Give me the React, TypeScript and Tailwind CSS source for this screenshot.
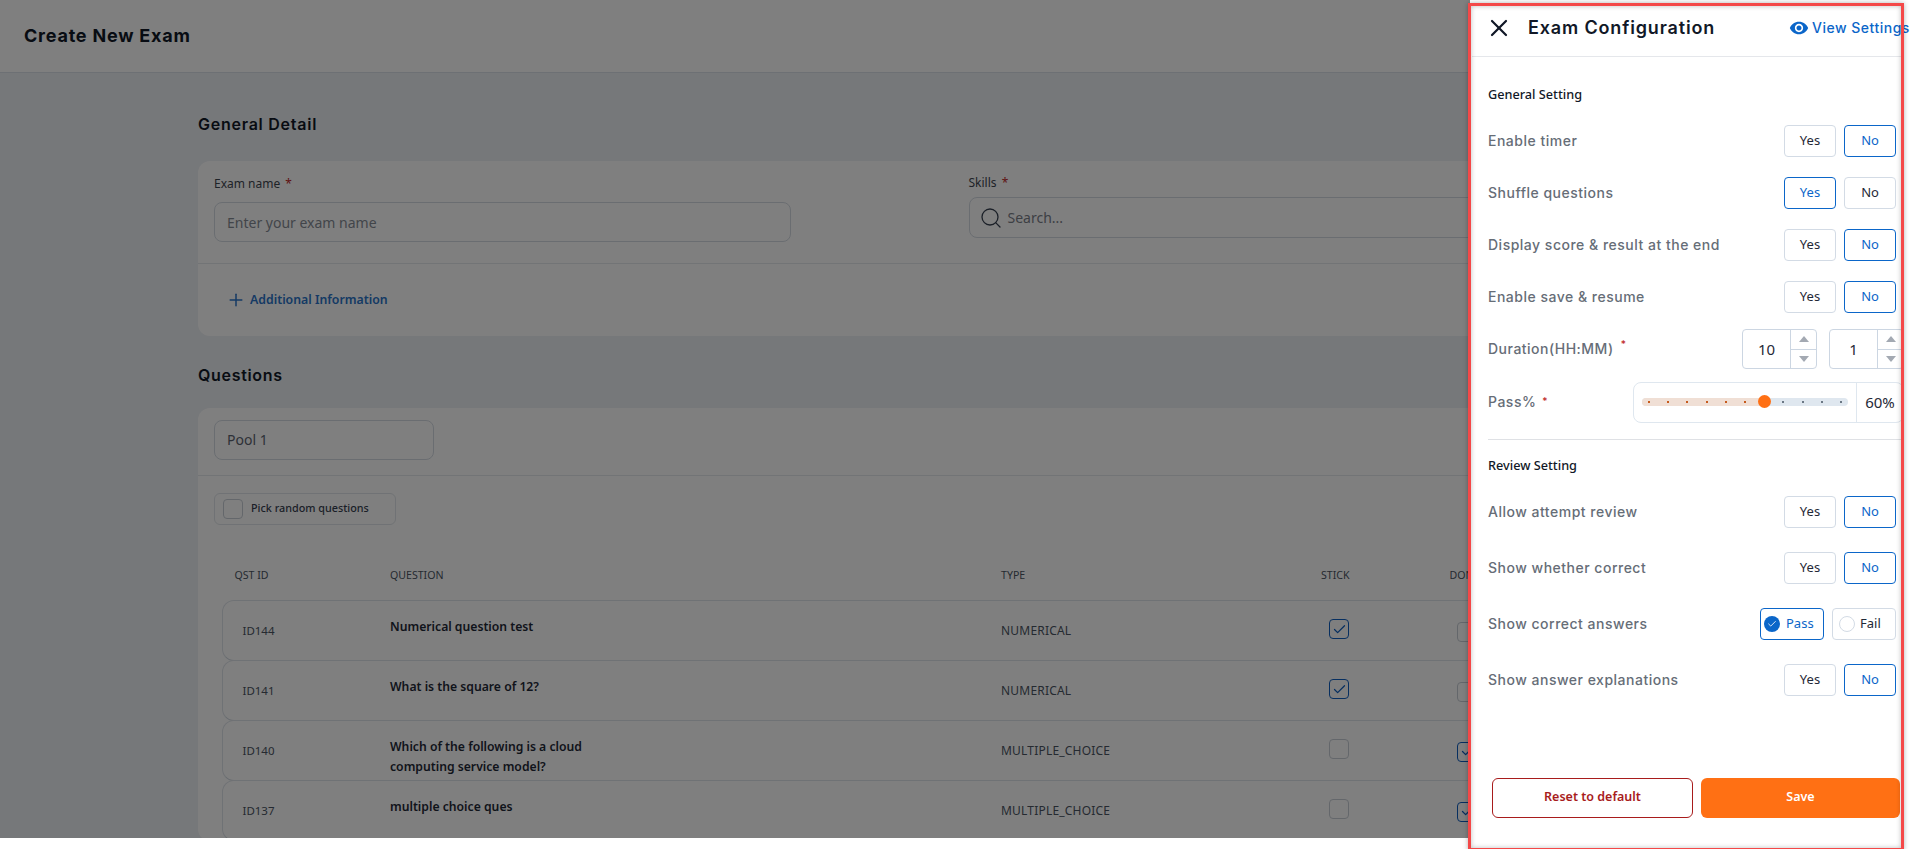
import { Check, Plus, Search, X } from 'lucide-react'
import { MdVisibility } from 'react-icons/md'

const QUESTIONS = [
  { id: 'ID144', text: 'Numerical question test', type: 'NUMERICAL', stick: true, done: false },
  { id: 'ID141', text: 'What is the square of 12?', type: 'NUMERICAL', stick: true, done: false },
  { id: 'ID140', text: 'Which of the following is a cloud computing service model?', type: 'MULTIPLE_CHOICE', stick: false, done: true },
  { id: 'ID137', text: 'multiple choice ques', type: 'MULTIPLE_CHOICE', stick: false, done: true },
]

const GENERAL = [
  { label: 'Enable timer', yes: false },
  { label: 'Shuffle questions', yes: true },
  { label: 'Display score & result at the end', yes: false },
  { label: 'Enable save & resume', yes: false },
]

const DOTS = [7, 26, 45, 65, 84, 103, 122, 141, 161, 180, 199]

const LABEL = "pb-[2px] font-['Inter',sans-serif] text-[14px] font-medium tracking-[0.5px] text-[#666d77]"

function Box({ checked, className }: { checked: boolean; className: string }) {
  return (
    <div className={`flex h-5 w-5 items-center justify-center rounded-[4px] border bg-white ${checked ? 'border-[#0f5fc0]' : 'border-[#c9ced6]'} ${className}`}>
      {checked && <Check size={15} strokeWidth={2} className="text-[#0f5fc0]" />}
    </div>
  )
}

function Choice({ label, active }: { label: string; active: boolean }) {
  return (
    <button className={`h-8 w-[52px] rounded-[4px] border bg-white text-[13px] ${active ? 'border-[#0b66c9] text-[#0b66c9]' : 'border-[#d3dbe5] text-[#1f2937]'}`}>
      {label}
    </button>
  )
}

function YesNoRow({ label, yes, height }: { label: string; yes: boolean; height: string }) {
  return (
    <div className={`flex items-center justify-between pr-2 ${height}`}>
      <span className={LABEL}>{label}</span>
      <div className="flex gap-2">
        <Choice label="Yes" active={yes} />
        <Choice label="No" active={!yes} />
      </div>
    </div>
  )
}

function Stepper({ value }: { value: string }) {
  return (
    <div className="flex h-10 w-[75px] rounded-[4px] border border-[#ccd6e2] bg-white">
      <div className="flex w-[48px] items-center justify-center border-r border-[#ccd6e2] text-[15px] text-[#1f2937]">{value}</div>
      <div className="flex flex-1 flex-col">
        <div className="flex flex-1 items-center justify-center border-b border-[#ccd6e2]">
          <svg width="10" height="6" viewBox="0 0 10 6"><path d="M5 0L10 6H0z" fill="#a3a9b2" /></svg>
        </div>
        <div className="flex flex-1 items-center justify-center">
          <svg width="10" height="6" viewBox="0 0 10 6"><path d="M0 0H10L5 6z" fill="#a3a9b2" /></svg>
        </div>
      </div>
    </div>
  )
}

function Background() {
  return (
    <div className="relative h-[838px] w-[1470px] overflow-hidden bg-[#edf0f4]">
      <div className="w-[1920px]">
        <div className="flex h-[73px] items-center border-b border-[#dbe1e8] bg-white pb-[1px] pl-6">
          <h1 className="font-['Inter',sans-serif] text-[18px] font-bold tracking-[0.78px] text-[#111827]">Create New Exam</h1>
        </div>

        <div className="ml-[198px] w-[1524px]">
          <h2 className="mt-[40px] h-[22px] font-['Inter',sans-serif] text-[16px] font-semibold leading-[22px] tracking-[0.75px] text-[#111827]">General Detail</h2>
          <div className="mt-[26px] h-[175px] rounded-xl bg-white">
            <div className="flex h-[103px] gap-[177.5px] border-b border-[#e5e8ed] px-4">
              <div className="w-[577px] pt-[14px]">
                <label className="block h-[18px] text-[12px] leading-[18px] text-[#3f4650]">Exam name <span className="ml-[2px] text-[#c02626]">*</span></label>
                <div className="mt-[9px] flex h-10 items-center rounded-lg border border-[#d5dbe3] px-[12px] text-[14px] text-[#858b94]">Enter your exam name</div>
              </div>
              <div className="flex-1 pt-[13px]">
                <label className="block h-[18px] text-[12px] leading-[18px] text-[#3f4650]">Skills <span className="ml-[2px] text-[#c02626]">*</span></label>
                <div className="mt-[5px] flex h-[41px] items-center gap-[5px] rounded-lg border border-[#d5dbe3] pl-[9px] text-[14px] text-[#7a8089]">
                  <Search size={24} strokeWidth={1.3} className="text-[#374151]" />
                  Search...
                </div>
              </div>
            </div>
            <div className="flex h-[72px] items-center gap-[4px] pl-[28px] text-[12.3px] font-semibold text-[#2a74c9]">
              <Plus size={20} strokeWidth={1.8} />
              Additional Information
            </div>
          </div>

          <h2 className="mt-[28px] h-[22px] font-['Inter',sans-serif] text-[16px] font-semibold leading-[22px] tracking-[0.68px] text-[#111827]">Questions</h2>
          <div className="mt-[22px] rounded-xl bg-white">
            <div className="h-[68px] border-b border-[#e5e8ed] px-4 pt-3">
              <div className="flex h-10 w-[220px] items-center rounded-lg border border-[#d5dbe3] px-[12px] pb-[2px] text-[14px] text-[#5b6370]">Pool 1</div>
            </div>
            <div className="px-4 pt-[17px]">
              <div className="flex h-8 w-[182px] items-center gap-2 rounded-[6px] border border-[#e1e5ea] pl-[8px] text-[10.8px] font-medium text-[#374151]">
                <Box checked={false} className="" />
                <span className="pb-[2px]">Pick random questions</span>
              </div>
            </div>
            <div className="mt-[42px] grid grid-cols-[155.5px_611px_320px_128.5px_1fr] pl-[36.5px] text-[10.6px] leading-4 text-[#4b5563]">
              <span>QST ID</span>
              <span>QUESTION</span>
              <span>TYPE</span>
              <span>STICK</span>
              <span>DONE</span>
            </div>
            <div className="ml-[23.5px] mr-4 mt-[18px]">
              {QUESTIONS.map((q) => (
                <div key={q.id} className="-mt-px grid h-[61px] grid-cols-[147.5px_611px_328px_128px_1fr] rounded-xl border border-[#dfe4ea] border-b-[#cfd6df] pl-5">
                  <span className="self-center text-[11.5px] text-[#4b5563]">{q.id}</span>
                  <span className="w-[200px] pt-[16px] text-[12.2px] font-semibold leading-5 text-[#1f2937]">{q.text}</span>
                  <span className="self-center text-[12px] tracking-[0.2px] text-[#4b5563]">{q.type}</span>
                  <Box checked={q.stick} className="mb-[3px] self-center" />
                  <Box checked={q.done} className="mt-[2px] self-center" />
                </div>
              ))}
            </div>
          </div>
        </div>
      </div>
      <div className="absolute inset-0 bg-black/50" />
    </div>
  )
}

function ConfigPanel() {
  return (
    <div className="absolute left-[1472px] top-0 flex h-[849px] w-[432px] flex-col bg-white font-['Noto_Sans',sans-serif]">
      <div className="flex h-[57px] shrink-0 items-center border-b border-[#e5e7eb] pl-[13px]">
        <X size={28} strokeWidth={1.9} className="text-[#111827]" />
        <h2 className="ml-[15px] pb-[2px] font-['Inter',sans-serif] text-[18px] font-semibold tracking-[0.85px] text-[#111827]">Exam Configuration</h2>
        <div className="absolute left-[317px] top-[17px] flex items-center gap-[3px] whitespace-nowrap font-['Inter',sans-serif] text-[14px] font-medium tracking-[0.5px] text-[#0b66c9]">
          <MdVisibility size={20} />
          View Settings
        </div>
      </div>

      <div className="flex flex-1 flex-col pl-4">
        <h3 className="mt-[27px] h-5 text-[12.7px] font-medium leading-5 text-[#111827]">General Setting</h3>
        <div className="mt-[11px]">
          {GENERAL.map((r) => (
            <YesNoRow key={r.label} label={r.label} yes={r.yes} height="h-[52px]" />
          ))}
        </div>
        <div className="flex h-[52px] items-center justify-between">
          <span className={LABEL}>Duration(HH:MM)<span className="relative -top-[6px] ml-[7px] text-[10px] text-[#c02626]">*</span></span>
          <div className="flex gap-3">
            <Stepper value="10" />
            <Stepper value="1" />
          </div>
        </div>
        <div className="flex h-[54px] items-center justify-between">
          <span className={LABEL}>Pass%<span className="relative -top-[2px] ml-[6px] text-[10px] text-[#c02626]">*</span></span>
          <div className="flex h-[41px] w-[271px] items-center rounded-lg border border-[#dfe7ef] bg-white">
            <div className="relative ml-[8px] h-2 w-[206px] rounded-full bg-[#dfe7ef]">
              <div className="h-2 w-[122px] rounded-full bg-[#f0dfd5]" />
              {DOTS.map((d, i) => (
                <span key={d} className={`absolute top-[3px] h-[2px] w-[2px] ${i < 7 ? 'bg-[#c75b1c]' : 'bg-[#6b7885]'}`} style={{ left: d - 1 }} />
              ))}
              <span className="absolute -top-[3px] left-[115.5px] h-[13px] w-[13px] rounded-full bg-[#ff7014]" />
            </div>
            <div className="ml-[8px] flex h-full flex-1 items-center justify-center border-l border-[#dfe7ef] text-[15px] text-[#1f2937]">60%</div>
          </div>
        </div>

        <div className="mt-[10px] border-t border-[#dfe1e5]" />
        <h3 className="mt-[15px] h-5 text-[12.7px] font-medium leading-5 text-[#111827]">Review Setting</h3>
        <div className="mt-[9px]">
          <YesNoRow label="Allow attempt review" yes={false} height="h-[56px]" />
          <YesNoRow label="Show whether correct" yes={false} height="h-[56px]" />
          <div className="flex h-[56px] items-center justify-between pr-2">
            <span className={LABEL}>Show correct answers</span>
            <div className="flex gap-2">
              <button className="flex h-8 w-16 items-center gap-[6px] rounded-[4px] border border-[#0b66c9] pl-[3px] text-[13px] text-[#0b66c9]">
                <span className="flex h-4 w-4 items-center justify-center rounded-full bg-[#0b66c9]">
                  <Check size={10} strokeWidth={2} className="text-white" />
                </span>
                Pass
              </button>
              <button className="flex h-8 w-16 items-center gap-[5px] rounded-[4px] border border-[#d3dbe5] pl-[6px] text-[13px] text-[#1f2937]">
                <span className="h-4 w-4 rounded-full border border-[#d3dbe5]" />
                Fail
              </button>
            </div>
          </div>
          <YesNoRow label="Show answer explanations" yes={false} height="h-[56px]" />
        </div>

        <div className="mt-auto mb-[31px] flex gap-2 pl-[4px] pr-[4px]">
          <button className="h-10 w-[201px] rounded-[6px] border border-[#a81c1c] pb-[1px] text-[12.5px] font-semibold text-[#a81c1c]">Reset to default</button>
          <button className="h-10 w-[199px] rounded-[6px] bg-[#ff7014] pb-[1px] text-[12.5px] font-semibold text-white">Save</button>
        </div>
      </div>
    </div>
  )
}

export default function App() {
  return (
    <div className="relative h-[849px] w-[1920px] overflow-hidden bg-white font-['Noto_Sans',sans-serif]">
      <Background />
      <ConfigPanel />
      {/* red annotation frame drawn over the panel */}
      <div className="pointer-events-none absolute left-[1468px] top-[3px] h-[848px] w-[436px] border-x-[3.5px] border-y-[3px] border-[#f44848] shadow-[0_0_5px_rgba(0,0,0,0.3),inset_0_0_5px_rgba(0,0,0,0.25)]" />
    </div>
  )
}
